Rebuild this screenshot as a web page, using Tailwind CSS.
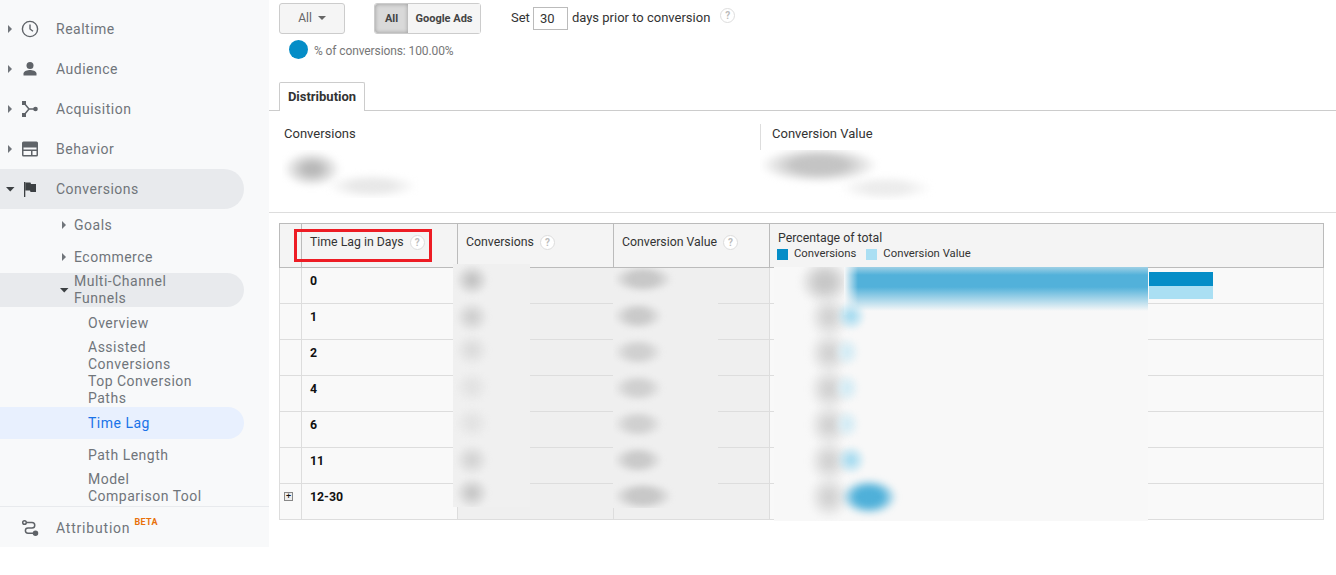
<!doctype html>
<html>

<head>
    <meta charset="UTF-8">
    <title>Time Lag</title>
    <script src="https://cdn.jsdelivr.net/npm/@tailwindcss/browser@4"></script>
</head>

<body class="w-[1336px] h-[575px] overflow-hidden bg-white font-['Roboto',sans-serif] flex items-start">
    <!-- sidebar -->
    <aside class="w-[269px] h-[547px] shrink-0 bg-[#f8f9fa] flex flex-col text-[14px] tracking-[0.5px] text-[#70757a]">
        <nav class="h-[506px] overflow-hidden pt-[9px] pr-[25px] flex flex-col">
            <a class="h-10 flex items-center">
                <span class="w-[21px] pl-[8px]"><svg width="5" height="8" viewBox="0 0 5 8"><path d="M0 0l4 4-4 4z" fill="#70757a"/></svg></span>
                <svg class="w-[18px] h-[18px]" viewBox="0 0 18 18" fill="none" stroke="#5f6368" stroke-width="1.4"><circle cx="9" cy="9" r="7.6"/><path d="M9 4.500V9l3 2.200"/></svg>
                <span class="ml-[17px]">Realtime</span>
            </a>
            <a class="h-10 flex items-center">
                <span class="w-[21px] pl-[8px]"><svg width="5" height="8" viewBox="0 0 5 8"><path d="M0 0l4 4-4 4z" fill="#70757a"/></svg></span>
                <svg class="w-[18px] h-[18px]" viewBox="0 0 18 18" fill="#5f6368"><circle cx="9" cy="5.500" r="3.500"/><path d="M2.500 15.500v-2c0-2.400 4.300-3.500 6.500-3.500s6.500 1.100 6.500 3.500v2z"/></svg>
                <span class="ml-[17px]">Audience</span>
            </a>
            <a class="h-10 flex items-center">
                <span class="w-[21px] pl-[8px]"><svg width="5" height="8" viewBox="0 0 5 8"><path d="M0 0l4 4-4 4z" fill="#70757a"/></svg></span>
                <svg class="w-[18px] h-[18px]" viewBox="0 0 18 18" fill="#5f6368"><rect x="1" y="1" width="4" height="4"/><rect x="1" y="13" width="4" height="4"/><circle cx="14.500" cy="9" r="2.300"/><path d="M3 3l5 6-5 6M8 9h6" fill="none" stroke="#5f6368" stroke-width="1.500"/></svg>
                <span class="ml-[17px]">Acquisition</span>
            </a>
            <a class="h-10 flex items-center">
                <span class="w-[21px] pl-[8px]"><svg width="5" height="8" viewBox="0 0 5 8"><path d="M0 0l4 4-4 4z" fill="#70757a"/></svg></span>
                <svg class="w-[18px] h-[18px]" viewBox="0 0 18 18"><path fill="#5f6368" d="M2.500 1.500h13A1.500 1.500 0 0 1 17 3v12a1.500 1.500 0 0 1-1.500 1.500h-13A1.500 1.500 0 0 1 1 15V3a1.500 1.500 0 0 1 1.500-1.500zM2.500 7.500v7.500h7.500V11H2.500V9.500h13V7.500zM11.500 11v4h4v-4z"/></svg>
                <span class="ml-[17px]">Behavior</span>
            </a>
            <a class="h-10 flex items-center bg-[#e8eaed] rounded-r-[20px]">
                <span class="w-[21px] pl-[6px]"><svg width="9" height="5" viewBox="0 0 9 5"><path d="M0 0h8.500l-4.250 4.500z" fill="#3c4043"/></svg></span>
                <svg class="w-[18px] h-[18px]" viewBox="0 0 18 18"><path fill="#3c4043" d="M3 2h1.300v15H3z"/><path fill="#3c4043" d="M4.300 2.500h5.200l.5 1.500h5v8h-5.500l-.5-1.500H4.300z"/></svg>
                <span class="ml-[17px]">Conversions</span>
            </a>
            <a class="h-8 flex items-center pl-[62px]">
                <svg class="mr-[7px]" width="5" height="8" viewBox="0 0 5 8"><path d="M0 0l4 4-4 4z" fill="#70757a"/></svg>
                <span>Goals</span>
            </a>
            <a class="h-8 flex items-center pl-[62px]">
                <svg class="mr-[7px]" width="5" height="8" viewBox="0 0 5 8"><path d="M0 0l4 4-4 4z" fill="#70757a"/></svg>
                <span>Ecommerce</span>
            </a>
            <a class="h-[34px] flex items-center pl-[60px] bg-[#e8eaed] rounded-r-[20px] leading-[17px]">
                <svg class="mr-[5px] shrink-0" width="9" height="5" viewBox="0 0 9 5"><path d="M0 0h8.500l-4.250 4.500z" fill="#3c4043"/></svg>
                <span class="w-[120px]">Multi-Channel Funnels</span>
            </a>
            <a class="h-8 flex items-center pl-[88px]">Overview</a>
            <a class="pl-[88px] leading-[17px] w-[210px]">Assisted Conversions</a>
            <a class="pl-[88px] leading-[17px] w-[210px]">Top Conversion Paths</a>
            <a class="h-8 flex items-center pl-[88px] bg-[#e8f0fe] rounded-r-[20px] text-[#1a73e8]">Time Lag</a>
            <a class="h-8 flex items-center pl-[88px]">Path Length</a>
            <a class="pl-[88px] leading-[17px] w-[210px]">Model Comparison Tool</a>
        </nav>
        <div class="h-[41px] border-t border-[#e8eaed] flex items-center pt-[2px]">
            <svg class="ml-[21px] w-[18px] h-[18px]" viewBox="0 0 18 18" fill="none" stroke="#5f6368" stroke-width="1.500"><circle cx="3.500" cy="3.500" r="1.800"/><path d="M5.500 3.500h5.500a2.700 2.700 0 0 1 0 5.500H7a2.600 2.600 0 0 0 0 5.200h6"/><circle cx="14.500" cy="14.200" r="2" fill="#5f6368"/></svg>
            <span class="ml-[17px] tracking-[0.8px]">Attribution</span>
            <span class="ml-[4px] mb-[10px] text-[9px] font-bold tracking-[0.4px] text-[#e8710a]">BETA</span>
        </div>
    </aside>

    <!-- main report -->
    <main class="relative flex-1 h-[575px] text-[12.3px] text-[#333]">
        <div class="h-[82px] pl-[10px] pt-[3px]">
            <div class="flex items-start">
                <button class="w-[66px] h-[31px] border border-[#ccc] rounded-[3px] bg-[#f5f5f5] text-[#666] text-[12px] flex items-center justify-center gap-[6px] pb-[1px]">All<svg width="8" height="4" viewBox="0 0 8 4"><path d="M0 0h8L4 4z" fill="#666"/></svg></button>
                <div class="ml-[29px] h-[31px] w-[107px] flex border border-[#ccc] rounded-[3px] font-bold text-[11px] text-[#444]">
                    <span class="w-[33px] flex items-center justify-center bg-[#d9d9d9] shadow-[inset_0_0_4px_#999] rounded-l-[3px] pt-[1px]">All</span>
                    <span class="flex-1 flex items-center justify-center bg-[#f5f5f5] pt-[1px]">Google Ads</span>
                </div>
                <div class="ml-[30px] h-[31px] flex items-center text-[13px] text-[#333] pb-[2px]">
                    <span>Set</span>
                    <span class="ml-[3px] w-[35px] h-[23px] border border-[#bbb] pl-[6px] mt-[2px] flex items-center">30</span>
                    <span class="ml-[4px]">days prior to conversion</span>
                    <span class="ml-[10px] mb-[4px] w-[15px] h-[15px] rounded-full border border-[#ddd] text-[#bbb] text-[10px] font-bold flex items-center justify-center">?</span>
                </div>
            </div>
            <div class="ml-[10px] mt-[5px] flex items-center">
                <span class="w-[19px] h-[19px] rounded-full bg-[#058dc7]"></span>
                <span class="ml-[6px] mt-[3px] text-[12px] tracking-[-0.1px] text-[#777]">% of conversions: 100.00%</span>
            </div>
        </div>

        <!-- tab strip -->
        <div class="h-[29px] border-b border-[#ccc] pl-[10px]">
            <div class="w-[86px] h-[29px] border border-b-0 border-[#ccc] rounded-t-[2px] bg-white flex items-center justify-center font-bold text-[13px] text-[#333]">Distribution</div>
        </div>

        <!-- scorecards -->
        <div class="h-[102px] border-b border-[#ddd] flex pt-[13px] pl-[15px] text-[13px]">
            <div class="w-[476px] text-[#333]">Conversions</div>
            <div class="h-[27px] border-l border-[#ddd] pl-[11px] text-[#333]">Conversion Value</div>
        </div>

        <!-- table -->
        <table class="ml-[10px] mt-[10px] w-[1045px] table-fixed border-collapse">
            <thead>
                <tr class="h-[44px] bg-[#f4f4f4] text-[#333] align-top">
                    <th class="w-[22px] border border-[#bbb]"></th>
                    <th class="w-[156px] border border-[#bbb] text-left font-normal pl-[8px] pt-[9px]"><span class="flex items-center">Time Lag in Days<span class="ml-[6px] w-[15px] h-[15px] rounded-full border border-[#ddd] bg-white text-[#bbb] text-[10px] font-bold flex items-center justify-center">?</span></span></th>
                    <th class="w-[156px] border border-[#bbb] text-left font-normal pl-[8px] pt-[9px]"><span class="flex items-center">Conversions<span class="ml-[6px] w-[15px] h-[15px] rounded-full border border-[#ddd] bg-white text-[#bbb] text-[10px] font-bold flex items-center justify-center">?</span></span></th>
                    <th class="w-[156px] border border-[#bbb] text-left font-normal pl-[8px] pt-[9px]"><span class="flex items-center">Conversion Value<span class="ml-[6px] w-[15px] h-[15px] rounded-full border border-[#ddd] bg-white text-[#bbb] text-[10px] font-bold flex items-center justify-center">?</span></span></th>
                    <th class="border border-[#bbb] text-left font-normal pl-[8px] pt-[5px]">
                        <div>Percentage of total</div>
                        <div class="flex items-center text-[11.3px] -ml-[1px] leading-[14px]"><i class="w-[11px] h-[11px] bg-[#058dc7]"></i><span class="ml-[6px]">Conversions</span><i class="ml-[10px] w-[11px] h-[11px] bg-[#aadff3]"></i><span class="ml-[6px]">Conversion Value</span></div>
                    </th>
                </tr>
            </thead>
            <tbody class="text-[#111] font-bold">
                <tr class="h-[36px] bg-[#f9f9f9] align-top"><td class="border border-[#ddd]"></td><td class="border border-[#ddd] pl-[8px] pt-[4px]">0</td><td class="border border-[#ddd] bg-[#efefef]"></td><td class="border border-[#ddd] bg-[#efefef]"></td><td class="border border-[#ddd] pt-[4px]"><div class="ml-[379px] w-[64px] h-[14px] bg-[#058dc7]"></div><div class="ml-[379px] w-[64px] h-[13px] bg-[#aadff3]"></div></td></tr>
                <tr class="h-[36px] bg-[#f9f9f9] align-top"><td class="border border-[#ddd]"></td><td class="border border-[#ddd] pl-[8px] pt-[4px]">1</td><td class="border border-[#ddd] bg-[#efefef]"></td><td class="border border-[#ddd] bg-[#efefef]"></td><td class="border border-[#ddd]"></td></tr>
                <tr class="h-[36px] bg-[#f9f9f9] align-top"><td class="border border-[#ddd]"></td><td class="border border-[#ddd] pl-[8px] pt-[4px]">2</td><td class="border border-[#ddd] bg-[#efefef]"></td><td class="border border-[#ddd] bg-[#efefef]"></td><td class="border border-[#ddd]"></td></tr>
                <tr class="h-[36px] bg-[#f9f9f9] align-top"><td class="border border-[#ddd]"></td><td class="border border-[#ddd] pl-[8px] pt-[4px]">4</td><td class="border border-[#ddd] bg-[#efefef]"></td><td class="border border-[#ddd] bg-[#efefef]"></td><td class="border border-[#ddd]"></td></tr>
                <tr class="h-[36px] bg-[#f9f9f9] align-top"><td class="border border-[#ddd]"></td><td class="border border-[#ddd] pl-[8px] pt-[4px]">6</td><td class="border border-[#ddd] bg-[#efefef]"></td><td class="border border-[#ddd] bg-[#efefef]"></td><td class="border border-[#ddd]"></td></tr>
                <tr class="h-[36px] bg-[#f9f9f9] align-top"><td class="border border-[#ddd]"></td><td class="border border-[#ddd] pl-[8px] pt-[4px]">11</td><td class="border border-[#ddd] bg-[#efefef]"></td><td class="border border-[#ddd] bg-[#efefef]"></td><td class="border border-[#ddd]"></td></tr>
                <tr class="h-[36px] bg-[#f9f9f9] align-top"><td class="border border-[#ddd] pl-[4px] pt-[8px]"><span class="w-[9px] h-[9px] border border-[#888] bg-[#eee] flex items-center justify-center text-[9px] leading-none font-normal">+</span></td><td class="border border-[#ddd] pl-[8px] pt-[4px]">12-30</td><td class="border border-[#ddd] bg-[#efefef]"></td><td class="border border-[#ddd] bg-[#efefef]"></td><td class="border border-[#ddd]"></td></tr>
            </tbody>
        </table>

        <!-- red highlight drawn over the header -->
        <div class="absolute left-[25px] top-[229px] w-[138px] h-[33px] border-[3px] border-[#ed1c24]"></div>

        <!-- redacted areas -->
        <div class="absolute left-[13px] top-[150px] w-[137px] h-[48px] bg-white overflow-hidden">
            <div class="absolute left-[1px] top-[1px] w-[58px] h-[36px] blur-[3px] bg-[radial-gradient(closest-side,#b8b8b8_25%,transparent)]"></div>
            <div class="absolute left-[45px] top-[24px] w-[90px] h-[24px] blur-[3px] bg-[radial-gradient(closest-side,#e8e8e8_45%,transparent)]"></div>
        </div>
        <div class="absolute left-[491px] top-[150px] w-[176px] h-[50px] bg-white overflow-hidden">
            <div class="absolute left-[0px] top-[-3px] w-[118px] h-[36px] blur-[3px] bg-[radial-gradient(closest-side,#c4c4c4_45%,transparent)]"></div>
            <div class="absolute left-[80px] top-[26px] w-[92px] h-[24px] blur-[3px] bg-[radial-gradient(closest-side,#ececec_45%,transparent)]"></div>
        </div>
        <div class="absolute left-[184px] top-[264px] w-[77px] h-[243px] bg-[#f0f0f0] overflow-hidden">
            <div class="absolute left-[2px] top-[0px] w-[34px] h-[32px] blur-[2px] bg-[radial-gradient(closest-side,#c4c4c4_15%,transparent)]"></div>
            <div class="absolute left-[2px] top-[37px] w-[34px] h-[32px] blur-[2px] bg-[radial-gradient(closest-side,#d0d0d0_15%,transparent)]"></div>
            <div class="absolute left-[2px] top-[70px] w-[34px] h-[32px] blur-[2px] bg-[radial-gradient(closest-side,#dcdcdc_15%,transparent)]"></div>
            <div class="absolute left-[2px] top-[107px] w-[34px] h-[32px] blur-[2px] bg-[radial-gradient(closest-side,#e2e2e2_15%,transparent)]"></div>
            <div class="absolute left-[2px] top-[143px] w-[34px] h-[32px] blur-[2px] bg-[radial-gradient(closest-side,#e2e2e2_15%,transparent)]"></div>
            <div class="absolute left-[2px] top-[180px] w-[34px] h-[32px] blur-[2px] bg-[radial-gradient(closest-side,#d4d4d4_15%,transparent)]"></div>
            <div class="absolute left-[2px] top-[213px] w-[34px] h-[32px] blur-[2px] bg-[radial-gradient(closest-side,#c8c8c8_15%,transparent)]"></div>
        </div>
        <div class="absolute left-[344px] top-[268px] w-[105px] h-[240px] bg-[#efefef] overflow-hidden">
            <div class="absolute left-[0px] top-[-3px] w-[60px] h-[28px] blur-[2px] bg-[radial-gradient(closest-side,#c8c8c8_45%,transparent)]"></div>
            <div class="absolute left-[0px] top-[34px] w-[50px] h-[28px] blur-[2px] bg-[radial-gradient(closest-side,#cacaca_40%,transparent)]"></div>
            <div class="absolute left-[0px] top-[70px] w-[50px] h-[28px] blur-[2px] bg-[radial-gradient(closest-side,#d0d0d0_40%,transparent)]"></div>
            <div class="absolute left-[0px] top-[106px] w-[50px] h-[28px] blur-[2px] bg-[radial-gradient(closest-side,#d0d0d0_40%,transparent)]"></div>
            <div class="absolute left-[0px] top-[142px] w-[50px] h-[28px] blur-[2px] bg-[radial-gradient(closest-side,#d0d0d0_40%,transparent)]"></div>
            <div class="absolute left-[0px] top-[178px] w-[50px] h-[28px] blur-[2px] bg-[radial-gradient(closest-side,#cacaca_40%,transparent)]"></div>
            <div class="absolute left-[0px] top-[214px] w-[60px] h-[28px] blur-[2px] bg-[radial-gradient(closest-side,#c8c8c8_45%,transparent)]"></div>
        </div>
        <div class="absolute left-[505px] top-[267px] w-[374px] h-[254px] bg-[#f8f8f8] overflow-hidden">
            <div class="absolute left-[25px] top-[-8px] w-[52px] h-[46px] blur-[3px] bg-[radial-gradient(closest-side,#c8c8c8_30%,transparent)]"></div>
            <div class="absolute left-[35px] top-[28px] w-[40px] h-[44px] blur-[3px] bg-[radial-gradient(closest-side,#d2d2d2_20%,transparent)]"></div>
            <div class="absolute left-[35px] top-[64px] w-[40px] h-[44px] blur-[3px] bg-[radial-gradient(closest-side,#d2d2d2_20%,transparent)]"></div>
            <div class="absolute left-[35px] top-[100px] w-[40px] h-[44px] blur-[3px] bg-[radial-gradient(closest-side,#d2d2d2_20%,transparent)]"></div>
            <div class="absolute left-[35px] top-[136px] w-[40px] h-[44px] blur-[3px] bg-[radial-gradient(closest-side,#d2d2d2_20%,transparent)]"></div>
            <div class="absolute left-[35px] top-[172px] w-[40px] h-[44px] blur-[3px] bg-[radial-gradient(closest-side,#d2d2d2_20%,transparent)]"></div>
            <div class="absolute left-[35px] top-[208px] w-[40px] h-[44px] blur-[3px] bg-[radial-gradient(closest-side,#d2d2d2_20%,transparent)]"></div>
            <div class="absolute left-[70px] top-0 right-0 h-[48px] bg-[linear-gradient(to_right,#f8f8f8,transparent_14px),linear-gradient(to_bottom,#9fd0e5,#52b1da_8px,#52b1da_20px,#f8f8f8_44px)]"></div>
            <div class="absolute left-[62px] top-[34px] w-[30px] h-[30px] blur-[2px] bg-[radial-gradient(closest-side,#a9dcf0_15%,transparent)]"></div>
            <div class="absolute left-[60px] top-[70px] w-[26px] h-[30px] blur-[2px] bg-[radial-gradient(closest-side,#d4ecf5_15%,transparent)]"></div>
            <div class="absolute left-[60px] top-[106px] w-[26px] h-[30px] blur-[2px] bg-[radial-gradient(closest-side,#d4ecf5_15%,transparent)]"></div>
            <div class="absolute left-[60px] top-[142px] w-[26px] h-[30px] blur-[2px] bg-[radial-gradient(closest-side,#d4ecf5_15%,transparent)]"></div>
            <div class="absolute left-[62px] top-[178px] w-[30px] h-[30px] blur-[2px] bg-[radial-gradient(closest-side,#a9dcf0_15%,transparent)]"></div>
            <div class="absolute left-[67px] top-[212px] w-[56px] h-[36px] blur-[3px] bg-[radial-gradient(closest-side,#4fb0d9_50%,transparent)]"></div>
        </div>
    </main>
</body>

</html>
